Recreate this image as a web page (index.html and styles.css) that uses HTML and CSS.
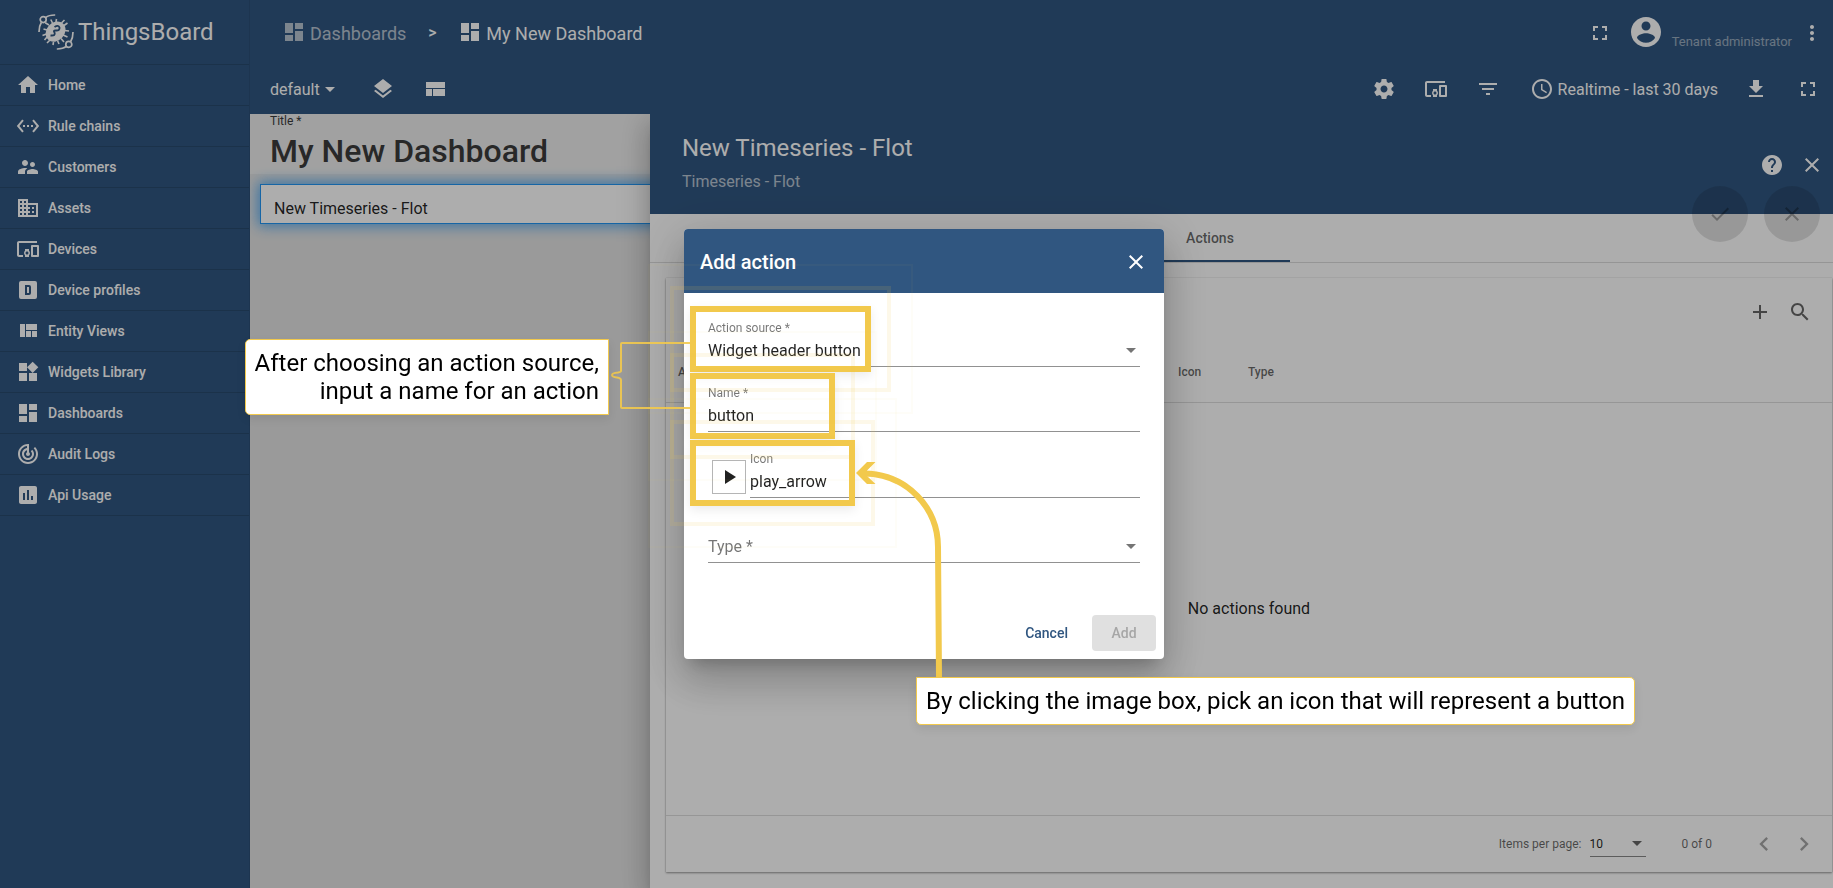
FILE: index.html
```html
<!DOCTYPE html>
<html lang="en">
<head>
<meta charset="utf-8">
<title>ThingsBoard</title>
<link rel="stylesheet" href="styles.css">
</head>
<body>
<svg class="defs" aria-hidden="true">
  <symbol id="home" viewBox="0 0 24 24"><path d="M10 20v-6h4v6h5v-8h3L12 3 2 12h3v8z"/></symbol>
  <symbol id="rules" viewBox="0 0 24 24"><path d="M7.77 6.76L6.23 5.48.82 12l5.41 6.52 1.54-1.28L3.42 12l4.35-5.24zM7 13h2v-2H7v2zm10-2h-2v2h2v-2zm-6 2h2v-2h-2v2zm6.77-7.52l-1.54 1.28L20.58 12l-4.35 5.24 1.54 1.28L23.18 12l-5.41-6.52z"/></symbol>
  <symbol id="people" viewBox="0 0 24 24"><path d="M16.5 12c1.38 0 2.49-1.12 2.49-2.5S17.88 7 16.5 7C15.12 7 14 8.12 14 9.5s1.12 2.5 2.5 2.5zM9 11c1.66 0 2.99-1.34 2.99-3S10.66 5 9 5C7.34 5 6 6.34 6 8s1.34 3 3 3zm7.5 3c-1.83 0-5.5.92-5.5 2.75V19h11v-2.25c0-1.83-3.67-2.75-5.5-2.75zM9 13c-2.33 0-7 1.17-7 3.5V19h7v-2.25c0-.85.33-2.34 2.37-3.47C10.5 13.1 9.66 13 9 13z"/></symbol>
  <symbol id="domain" viewBox="0 0 24 24"><path d="M12 7V3H2v18h20V7H12zM6 19H4v-2h2v2zm0-4H4v-2h2v2zm0-4H4V9h2v2zm0-4H4V5h2v2zm4 12H8v-2h2v2zm0-4H8v-2h2v2zm0-4H8V9h2v2zm0-4H8V5h2v2zm10 12h-8v-2h2v-2h-2v-2h2v-2h-2V9h8v10zm-2-8h-2v2h2v-2zm0 4h-2v2h2v-2z"/></symbol>
  <symbol id="devices" viewBox="0 0 24 24"><path d="M3 6h18V4H3c-1.1 0-2 .9-2 2v12c0 1.1.9 2 2 2h4v-2H3V6zm10 6H9v1.78c-.61.55-1 1.33-1 2.22s.39 1.67 1 2.22V20h4v-1.78c.61-.55 1-1.34 1-2.22s-.39-1.67-1-2.22V12zm-2 5.5c-.83 0-1.5-.67-1.5-1.5s.67-1.5 1.5-1.5 1.5.67 1.5 1.5-.67 1.5-1.5 1.5zM22 8h-6c-.5 0-1 .5-1 1v10c0 .5.5 1 1 1h6c.5 0 1-.5 1-1V9c0-.5-.5-1-1-1zm-1 10h-4v-8h4v8z"/></symbol>
  <symbol id="profile" viewBox="0 0 24 24"><path d="M9 7v10h4a2 2 0 0 0 2-2V9a2 2 0 0 0-2-2H9m2 2h2v6h-2V9M5 3h14a2 2 0 0 1 2 2v14a2 2 0 0 1-2 2H5a2 2 0 0 1-2-2V5a2 2 0 0 1 2-2z" fill-rule="evenodd"/></symbol>
  <symbol id="quilt" viewBox="0 0 24 24"><path d="M10 18h5v-6h-5v6zm-6 0h5V5H4v13zm12 0h5v-6h-5v6zM10 5v6h11V5H10z"/></symbol>
  <symbol id="widgets" viewBox="0 0 24 24"><path d="M13 13v8h8v-8h-8zM3 21h8v-8H3v8zM3 3v8h8V3H3zm13.66-1.31L11 7.34 16.66 13l5.66-5.66-5.66-5.65z"/></symbol>
  <symbol id="dash" viewBox="0 0 24 24"><path d="M3 13h8V3H3v10zm0 8h8v-6H3v6zm10 0h8V11h-8v10zm0-18v6h8V3h-8z"/></symbol>
  <symbol id="track" viewBox="0 0 24 24"><path d="M19.07 4.93l-1.41 1.41C19.1 7.79 20 9.79 20 12c0 4.42-3.58 8-8 8s-8-3.58-8-8c0-4.08 3.05-7.44 7-7.93v2.02C8.16 6.57 6 9.03 6 12c0 3.31 2.69 6 6 6s6-2.69 6-6c0-1.66-.67-3.16-1.76-4.24l-1.41 1.41C15.55 9.9 16 10.9 16 12c0 2.21-1.79 4-4 4s-4-1.79-4-4c0-1.86 1.28-3.41 3-3.86v2.14c-.6.35-1 .98-1 1.72 0 1.1.9 2 2 2s2-.9 2-2c0-.74-.4-1.38-1-1.72V2h-1C6.48 2 2 6.48 2 12s4.48 10 10 10 10-4.48 10-10c0-2.76-1.12-5.26-2.93-7.07z"/></symbol>
  <symbol id="chart" viewBox="0 0 24 24"><path d="M19 3H5c-1.1 0-2 .9-2 2v14c0 1.1.9 2 2 2h14c1.1 0 2-.9 2-2V5c0-1.1-.9-2-2-2zM9 17H7v-7h2v7zm4 0h-2V7h2v10zm4 0h-2v-4h2v4z"/></symbol>
  <symbol id="layers" viewBox="0 0 24 24"><path d="M11.99 18.54l-7.37-5.73L3 14.07l9 7 9-7-1.63-1.27-7.38 5.74zM12 16l7.36-5.73L21 9l-9-7-9 7 1.63 1.27L12 16z"/></symbol>
  <symbol id="compact" viewBox="0 0 24 24"><path d="M3 19h6v-7H3v7zm7 0h12v-7H10v7zM3 5v6h19V5H3z"/></symbol>
  <symbol id="settings" viewBox="0 0 24 24"><path d="M19.43 12.98c.04-.32.07-.64.07-.98s-.03-.66-.07-.98l2.11-1.65c.19-.15.24-.42.12-.64l-2-3.46c-.12-.22-.39-.3-.61-.22l-2.49 1c-.52-.4-1.08-.73-1.69-.98l-.38-2.65C14.46 2.18 14.25 2 14 2h-4c-.25 0-.46.18-.49.42l-.38 2.65c-.61.25-1.17.59-1.69.98l-2.49-1c-.23-.09-.49 0-.61.22l-2 3.46c-.13.22-.07.49.12.64l2.11 1.65c-.04.32-.07.65-.07.98s.03.66.07.98l-2.11 1.65c-.19.15-.24.42-.12.64l2 3.46c.12.22.39.3.61.22l2.49-1c.52.4 1.08.73 1.69.98l.38 2.65c.03.24.24.42.49.42h4c.25 0 .46-.18.49-.42l.38-2.65c.61-.25 1.17-.59 1.69-.98l2.49 1c.23.09.49 0 .61-.22l2-3.46c.12-.22.07-.49-.12-.64l-2.11-1.65zM12 15.5c-1.93 0-3.5-1.57-3.5-3.5s1.57-3.5 3.5-3.5 3.5 1.57 3.5 3.5-1.57 3.5-3.5 3.5z"/></symbol>
  <symbol id="filter" viewBox="0 0 24 24"><path d="M10 18h4v-2h-4v2zM3 6v2h18V6H3zm3 7h12v-2H6v2z"/></symbol>
  <symbol id="clock" viewBox="0 0 24 24"><path d="M11.99 2C6.47 2 2 6.48 2 12s4.47 10 9.99 10C17.52 22 22 17.52 22 12S17.52 2 11.99 2zM12 20c-4.42 0-8-3.58-8-8s3.58-8 8-8 8 3.58 8 8-3.58 8-8 8zm.5-13H11v6l5.25 3.15.75-1.23-4.5-2.67z"/></symbol>
  <symbol id="download" viewBox="0 0 24 24"><path d="M19 9h-4V3H9v6H5l7 7 7-7zM5 18v2h14v-2H5z"/></symbol>
  <symbol id="full" viewBox="0 0 24 24"><path d="M7 14H5v5h5v-2H7v-3zm-2-4h2V7h3V5H5v5zm12 7h-3v2h5v-5h-2v3zM14 5v2h3v3h2V5h-5z"/></symbol>
  <symbol id="account" viewBox="0 0 24 24"><path d="M12 2C6.48 2 2 6.48 2 12s4.48 10 10 10 10-4.48 10-10S17.52 2 12 2zm0 3c1.66 0 3 1.34 3 3s-1.34 3-3 3-3-1.34-3-3 1.34-3 3-3zm0 14.2c-2.5 0-4.71-1.28-6-3.22.03-1.99 4-3.08 6-3.08 1.99 0 5.97 1.09 6 3.08-1.29 1.94-3.5 3.22-6 3.22z"/></symbol>
  <symbol id="more" viewBox="0 0 24 24"><path d="M12 8c1.1 0 2-.9 2-2s-.9-2-2-2-2 .9-2 2 .9 2 2 2zm0 2c-1.1 0-2 .9-2 2s.9 2 2 2 2-.9 2-2-.9-2-2-2zm0 6c-1.1 0-2 .9-2 2s.9 2 2 2 2-.9 2-2-.9-2-2-2z"/></symbol>
  <symbol id="help" viewBox="0 0 24 24"><path d="M12 2C6.48 2 2 6.48 2 12s4.48 10 10 10 10-4.48 10-10S17.52 2 12 2zm1 17h-2v-2h2v2zm2.07-7.75l-.9.92C13.45 12.9 13 13.5 13 15h-2v-.5c0-1.1.45-2.1 1.17-2.83l1.24-1.26c.37-.36.59-.86.59-1.41 0-1.1-.9-2-2-2s-2 .9-2 2H8c0-2.21 1.79-4 4-4s4 1.79 4 4c0 .88-.36 1.68-.93 2.25z"/></symbol>
  <symbol id="close" viewBox="0 0 24 24"><path d="M19 6.41L17.59 5 12 10.59 6.41 5 5 6.41 10.59 12 5 17.59 6.41 19 12 13.41 17.59 19 19 17.59 13.41 12z"/></symbol>
  <symbol id="done" viewBox="0 0 24 24"><path d="M9 16.2L4.8 12l-1.4 1.4L9 19 21 7l-1.4-1.4L9 16.2z"/></symbol>
  <symbol id="add" viewBox="0 0 24 24"><path d="M19 13h-6v6h-2v-6H5v-2h6V5h2v6h6v2z"/></symbol>
  <symbol id="search" viewBox="0 0 24 24"><path d="M15.5 14h-.79l-.28-.27C15.41 12.59 16 11.11 16 9.5 16 5.91 13.09 3 9.5 3S3 5.91 3 9.5 5.91 16 9.5 16c1.61 0 3.09-.59 4.23-1.57l.27.28v.79l5 4.99L20.49 19l-4.99-5zm-6 0C7.01 14 5 11.99 5 9.5S7.01 5 9.5 5 14 7.01 14 9.5 11.99 14 9.5 14z"/></symbol>
  <symbol id="prev" viewBox="0 0 24 24"><path d="M15.41 7.41L14 6l-6 6 6 6 1.41-1.41L10.83 12z"/></symbol>
  <symbol id="next" viewBox="0 0 24 24"><path d="M10 6L8.59 7.41 13.17 12l-4.58 4.59L10 18l6-6z"/></symbol>
  <symbol id="play" viewBox="0 0 24 24"><path d="M8 5v14l11-7z"/></symbol>
  <symbol id="drop" viewBox="0 0 10 5"><path d="M0 0l5 5 5-5z"/></symbol>
</svg>

<div class="app">
  <aside class="sidebar">
    <div class="brand">
      <svg class="brand-mark" viewBox="0 0 36 36" fill="none" stroke="currentColor" stroke-width="1.7">
        <g id="arm"><circle cx="5.2" cy="5.6" r="3"/><path d="M7.6 3.6Q11 .9 17.2 1M3.4 8.2Q1 12 1 18"/></g>
        <use href="#arm" transform="rotate(180 18 18)"/>
        <path stroke-width="1.6" d="M11 11L7.2 8.8M14.5 9L12.8 5.500M18 8L18.500 5M23.500 9L26.500 6M26 11.500L29.500 9M26.500 16.500L31 17M25 21L29.500 23M23 24.500L26 28M19.500 26.500L21 30M15.500 28L15 31M12 26L9 29M9 23L6.500 26M8.500 20L4.500 21.500M9 16L5.500 15"/>
        <ellipse cx="17.6" cy="17.6" rx="11" ry="9" transform="rotate(-48 17.6 17.6)" fill="currentColor" stroke="none"/>
        <path class="brand-cut" stroke-width="1.9" d="M16.500 13Q20.500 10.500 21.500 13.500Q22 17 17.500 16.500Q15 16.500 16.500 18.500Q18 22 12.500 21.500"/>
      </svg>
      <span>ThingsBoard</span>
    </div>
    <nav>
      <a class="nav-item" href="#"><svg class="icon"><use href="#home"/></svg>Home</a>
      <a class="nav-item" href="#"><svg class="icon"><use href="#rules"/></svg>Rule chains</a>
      <a class="nav-item" href="#"><svg class="icon"><use href="#people"/></svg>Customers</a>
      <a class="nav-item" href="#"><svg class="icon"><use href="#domain"/></svg>Assets</a>
      <a class="nav-item" href="#"><svg class="icon"><use href="#devices"/></svg>Devices</a>
      <a class="nav-item" href="#"><svg class="icon"><use href="#profile"/></svg>Device profiles</a>
      <a class="nav-item" href="#"><svg class="icon"><use href="#quilt"/></svg>Entity Views</a>
      <a class="nav-item" href="#"><svg class="icon"><use href="#widgets"/></svg>Widgets Library</a>
      <a class="nav-item" href="#"><svg class="icon"><use href="#dash"/></svg>Dashboards</a>
      <a class="nav-item" href="#"><svg class="icon"><use href="#track"/></svg>Audit Logs</a>
      <a class="nav-item" href="#"><svg class="icon"><use href="#chart"/></svg>Api Usage</a>
    </nav>
  </aside>

  <div class="page">
    <header class="topbar">
      <a class="crumb crumb-parent" href="#"><svg class="icon"><use href="#dash"/></svg><span>Dashboards</span></a>
      <span class="crumb-sep">&gt;</span>
      <a class="crumb" href="#"><svg class="icon"><use href="#dash"/></svg><span>My New Dashboard</span></a>
      <span class="spacer"></span>
      <button class="icon-btn" aria-label="Fullscreen"><svg class="icon"><use href="#full"/></svg></button>
      <svg class="avatar"><use href="#account"/></svg>
      <span class="role">Tenant administrator</span>
      <button class="icon-btn" aria-label="More"><svg class="icon"><use href="#more"/></svg></button>
    </header>
    <div class="toolbar">
      <div class="state">
        <select class="state-select" aria-label="State"><option>default</option></select>
        <svg class="caret"><use href="#drop"/></svg>
      </div>
      <button class="icon-btn" aria-label="Layers"><svg class="icon"><use href="#layers"/></svg></button>
      <button class="icon-btn" aria-label="Layout"><svg class="icon"><use href="#compact"/></svg></button>
      <span class="spacer"></span>
      <button class="icon-btn" aria-label="Settings"><svg class="icon"><use href="#settings"/></svg></button>
      <button class="icon-btn" aria-label="Entity aliases"><svg class="icon"><use href="#devices"/></svg></button>
      <button class="icon-btn" aria-label="Filters"><svg class="icon"><use href="#filter"/></svg></button>
      <button class="time-btn"><svg class="icon"><use href="#clock"/></svg>Realtime - last 30 days</button>
      <button class="icon-btn" aria-label="Export"><svg class="icon"><use href="#download"/></svg></button>
      <button class="icon-btn" aria-label="Expand"><svg class="icon"><use href="#full"/></svg></button>
    </div>

    <div class="workspace">
      <section class="board">
        <div class="board-title">
          <label for="title">Title *</label>
          <input id="title" type="text" value="My New Dashboard">
        </div>
        <div class="widget">New Timeseries - Flot</div>
      </section>

      <section class="details">
        <div class="details-head">
          <div class="details-names">
            <h2>New Timeseries - Flot</h2>
            <p>Timeseries - Flot</p>
          </div>
          <button class="icon-btn" aria-label="Help"><svg class="icon"><use href="#help"/></svg></button>
          <button class="icon-btn" aria-label="Close details"><svg class="icon"><use href="#close"/></svg></button>
          <div class="fabs">
            <button class="fab" disabled aria-label="Apply"><svg class="icon"><use href="#done"/></svg></button>
            <button class="fab" disabled aria-label="Decline"><svg class="icon"><use href="#close"/></svg></button>
          </div>
        </div>
        <div class="tabs"><button class="tab">Actions</button></div>
        <div class="card">
          <div class="card-tools">
            <button class="icon-btn" aria-label="Add action"><svg class="icon"><use href="#add"/></svg></button>
            <button class="icon-btn" aria-label="Search"><svg class="icon"><use href="#search"/></svg></button>
          </div>
          <table class="actions">
            <thead><tr><th class="col-source">Action source</th><th class="col-icon">Icon</th><th>Type</th></tr></thead>
          </table>
          <div class="empty">No actions found</div>
          <div class="paginator">
            <label for="size">Items per page:</label>
            <div class="size">
              <select id="size"><option>10</option></select>
              <svg class="caret"><use href="#drop"/></svg>
            </div>
            <span class="range">0 of 0</span>
            <button class="icon-btn" aria-label="Previous page" disabled><svg class="icon"><use href="#prev"/></svg></button>
            <button class="icon-btn" aria-label="Next page" disabled><svg class="icon"><use href="#next"/></svg></button>
          </div>
        </div>
      </section>
    </div>
  </div>
</div>

<div class="backdrop">
  <div class="dialog" role="dialog" aria-labelledby="dlg">
    <div class="dialog-head">
      <h2 id="dlg">Add action</h2>
      <button class="icon-btn" aria-label="Close"><svg class="icon"><use href="#close"/></svg></button>
    </div>
    <form class="dialog-body">
      <div class="field">
        <label for="source">Action source *</label>
        <select id="source"><option>Widget header button</option></select>
        <svg class="caret"><use href="#drop"/></svg>
      </div>
      <div class="field">
        <label for="name">Name *</label>
        <input id="name" type="text" value="button">
      </div>
      <div class="icon-row">
        <button class="icon-box" type="button" aria-label="Pick icon"><svg class="icon"><use href="#play"/></svg></button>
        <div class="field">
          <label for="icon">Icon</label>
          <input id="icon" type="text" value="play_arrow">
        </div>
      </div>
      <div class="field field-empty">
        <select id="type" aria-label="Type"><option>Type *</option></select>
        <svg class="caret"><use href="#drop"/></svg>
      </div>
    </form>
    <div class="dialog-actions">
      <button class="btn btn-text">Cancel</button>
      <button class="btn btn-disabled" disabled>Add</button>
    </div>

    <div class="mark mark-source"></div>
    <div class="mark mark-name"></div>
    <div class="mark mark-icon"></div>
    <svg class="lines" viewBox="0 0 340 460" fill="none" stroke="#f2c94c">
      <path stroke-width="2" stroke-opacity=".9" stroke-linejoin="round" d="M86 114H18Q17 114 17 115V142Q17 143 14 143.500Q8 144 8 146Q8 148 13 148.500Q17 149 17 151V178Q17 179 18 179H86"/>
      <path stroke-width="6" d="M260 244.500C304 245 334 280 334 318L335 448"/>
      <path fill="#f2c94c" stroke="none" d="M252 244L263 233H271.500L263 241.500V247L271.500 255H263Z"/>
    </svg>
    <div class="callout callout-source">After choosing an action source,<br>input a name for an action</div>
    <div class="callout callout-icon">By clicking the image box, pick an icon that will represent a button</div>
  </div>
</div>
</body>
</html>
```
FILE: styles.css
```css
* { box-sizing: border-box; }
body { margin: 0; font-family: Roboto, "Liberation Sans", sans-serif; font-size: 16px; color: rgba(0, 0, 0, .87); overflow: hidden; }
h2, p { margin: 0; font-weight: 400; }
button, input, select { font: inherit; color: inherit; border: 0; padding: 0; margin: 0; background: none; border-radius: 0; outline: 0; }
select { appearance: none; opacity: 1; }
a { color: inherit; text-decoration: none; }
.defs { position: absolute; width: 0; height: 0; }
.icon { width: 24px; height: 24px; fill: currentColor; display: block; flex: none; }
.caret { width: 10px; height: 5px; fill: currentColor; pointer-events: none; flex: none; }
.icon-btn { width: 40px; height: 40px; display: grid; place-items: center; flex: none; }
.spacer { flex: 1; }

.app { display: flex; height: 100vh; }
.sidebar { width: 250px; flex: none; background: #305680; color: #fff; border-right: 1px solid #2c4f76; }
.brand { height: 65px; padding-left: 38px; display: flex; align-items: center; gap: 4px; font-size: 24px; border-bottom: 1px solid #294a6e; }
.brand-mark { width: 36px; height: 36px; }
.brand-cut { stroke: #305680; }
.nav-item { height: 41px; padding: 0 16px; display: flex; align-items: center; gap: 8px; font-size: 14px; font-weight: 500; border-bottom: 1px solid #294a6e; }

.page { flex: 1; min-width: 0; display: flex; flex-direction: column; background: #305680; }
.topbar { height: 64px; display: flex; align-items: center; color: #fff; padding: 0 1px 0 32px; font-size: 18px; }
.crumb { display: flex; align-items: center; gap: 4px; }
.crumb-parent { opacity: .65; }
.crumb span { padding-top: 3px; }
.crumb-sep { width: 52px; text-align: center; font-size: 16px; font-weight: 500; }
.topbar .icon-btn { padding-top: 2px; }
.avatar { width: 36px; height: 36px; fill: #fff; margin: 0 8px; }
.role { font-size: 13px; opacity: .5; padding-top: 18px; }
.toolbar { height: 50px; padding: 0 5px 0 20px; display: flex; align-items: center; gap: 12px; color: #fff; }
.state { display: flex; align-items: center; width: 81px; }
.state-select { width: 55px; }
.time-btn { display: flex; align-items: center; gap: 4px; margin: 0 6px 0 10px; }

.workspace { flex: 1; min-height: 0; display: flex; }
.board { width: 400px; flex: none; overflow: hidden; background: #e4e4e4; }
.board-title { height: 60px; padding: 0 20px; background: #eee; color: #3b3b3b; display: flex; flex-direction: column; }
.board-title label { font-size: 12px; line-height: 14px; }
.board-title input { font-size: 32px; font-weight: 500; line-height: 40px; height: 50px; width: 100%; }
.widget { height: 40px; margin: 10px 0 0 10px; padding: 12px 13px 0; width: 600px; line-height: 24px; background: #fff; border: 1px solid #2196f3; box-shadow: 0 0 14px 2px rgba(33, 150, 243, .75); }
.details { flex: 1; min-width: 0; position: relative; display: flex; flex-direction: column; background: #fff; box-shadow: 0 8px 10px -5px rgba(0, 0, 0, .2), 0 16px 24px 2px rgba(0, 0, 0, .14), 0 6px 30px 5px rgba(0, 0, 0, .12); clip-path: inset(0 0 0 -60px); }
.details-head { position: relative; height: 100px; padding: 2px 1px 0 32px; display: flex; align-items: center; background: #305680; color: #fff; }
.details-names { flex: 1; }
.details-names h2 { font-size: 24px; line-height: 32px; }
.details-names p { line-height: 32px; opacity: .65; padding-top: 2px; }
.fabs { position: absolute; right: 13px; bottom: -28px; display: flex; gap: 16px; }
.fab { width: 56px; height: 56px; border-radius: 50%; display: grid; place-items: center; background: rgba(0, 0, 0, .12); color: rgba(0, 0, 0, .3); }
.tabs { height: 49px; padding-left: 480px; border-bottom: 1px solid #dcdcdc; }
.tab { width: 160px; height: 48px; font-size: 14px; font-weight: 500; color: rgba(0, 0, 0, .6); padding-top: 2px; border-bottom: 2px solid #305680; }
.card { flex: 1; margin: 15px 1px 16px 16px; display: flex; flex-direction: column; box-shadow: 0 1px 2px 0 rgba(0, 0, 0, .4), 0 0 1px 0 rgba(0, 0, 0, .2); }
.card-tools { height: 68px; padding: 0 12px; display: flex; justify-content: flex-end; align-items: center; color: rgba(0, 0, 0, .6); }
.actions { width: 100%; border-collapse: collapse; text-align: left; }
.actions th { height: 56px; padding: 0 0 4px 12px; font-size: 12px; font-weight: 500; color: rgba(0, 0, 0, .6); border-bottom: 1px solid #ddd; }
.actions .col-source { width: 500px; }
.actions .col-icon { width: 70px; }
.empty { flex: 1; display: grid; place-items: center; }
.paginator { height: 57px; padding-right: 8px; border-top: 1px solid #ddd; display: flex; justify-content: flex-end; align-items: center; font-size: 12px; color: rgba(0, 0, 0, .6); }
.size { width: 56px; height: 26px; margin: 0 36px 0 8px; display: flex; align-items: center; border-bottom: 1px solid #888; }
.size select { flex: 1; color: rgba(0, 0, 0, .87); }
.size .caret { margin-right: 4px; }
.range { margin-right: 32px; }
.paginator .icon-btn:disabled { color: rgba(0, 0, 0, .35); }
.paginator .icon { width: 28px; height: 28px; }

.backdrop { position: fixed; inset: 0; padding-left: 15px; display: grid; place-items: center; background: rgba(0, 0, 0, .32); }
.dialog { position: relative; width: 480px; border-radius: 4px; background: #fff; box-shadow: 0 11px 15px -7px rgba(0, 0, 0, .2), 0 24px 38px 3px rgba(0, 0, 0, .14), 0 9px 46px 8px rgba(0, 0, 0, .12); }
.dialog-head { height: 64px; padding: 2px 8px 0 16px; display: flex; align-items: center; justify-content: space-between; background: #305680; color: #fff; border-radius: 4px 4px 0 0; }
.dialog-head h2 { font-size: 20px; font-weight: 500; }
.dialog-body { padding: 9px 24px 0; }
.field { position: relative; height: 65px; padding-top: 18px; border-bottom: 1px solid #919191; display: grid; grid-template-columns: 1fr auto; grid-template-rows: 16px 24px; align-items: center; flex: 1; }
.field label { grid-column: 1 / -1; font-size: 12px; color: rgba(0, 0, 0, .54); }
.field input, .field select { width: 100%; height: 24px; margin-top: 4px; }
.field .caret { color: #757575; margin: 4px 4px 0 0; }
.icon-row { display: flex; height: 66px; padding: 1px 0 0 4px; gap: 4px; }
.icon-box { width: 34px; height: 34px; margin-top: 27px; border: 1px solid #b5b5b5; display: grid; place-items: center; color: rgba(0, 0, 0, .87); }
.field-empty { grid-template-rows: 48px; color: rgba(0, 0, 0, .54); }
.field-empty select { margin-top: 12px; }
.field-empty .caret { margin-top: 12px; }
.dialog-actions { margin-top: 52px; padding: 0 8px 8px; display: flex; justify-content: flex-end; gap: 8px; }
.btn { height: 36px; padding: 0 16px; font-size: 14px; font-weight: 500; border-radius: 4px; }
.btn-text { color: #305680; }
.btn-disabled { width: 64px; background: #e0e0e0; color: #a6a6a6; }

/* Guide marks over the form */
.mark { position: absolute; left: 6px; height: 66px; border: 6px solid #f2c94c; box-shadow: 0 4px 10px rgba(0, 0, 0, .08); pointer-events: none; }
.mark::before, .mark::after { content: ""; position: absolute; }
.mark::before { inset: -26px; border: 4px solid rgba(242, 201, 76, .12); }
.mark::after { inset: -48px; border: 2px solid rgba(242, 201, 76, .04); }
.mark-source { top: 77px; width: 181px; }
.mark-name { top: 144px; width: 145px; }
.mark-icon { top: 211px; width: 165px; }
.lines { position: absolute; left: -80px; top: 0; width: 340px; height: 460px; pointer-events: none; }
.callout { position: absolute; padding: 9px; background: #fff; border: 1px solid #f2c94c; color: #000; font-size: 24px; line-height: 28px; white-space: nowrap; box-shadow: 0 4px 10px rgba(0, 0, 0, .08); }
.callout-source { right: 555px; top: 110px; text-align: right; border-radius: 5px 0 0 5px; }
.callout-icon { left: 232px; top: 448px; border-radius: 0 5px 5px 5px; }
```
